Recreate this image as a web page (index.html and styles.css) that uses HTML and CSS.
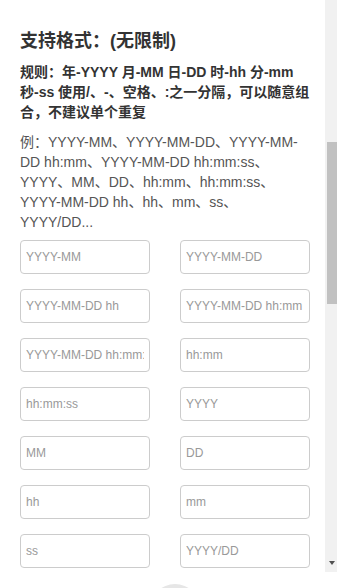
FILE: index.html
```html
<!DOCTYPE html>
<html lang="zh-CN">
<head>
<meta charset="utf-8">
<title>支持格式</title>
<link rel="stylesheet" href="styles.css">
</head>
<body>
<div class="app">
  <div class="viewport">
    <main class="content">
      <h2 class="title">支持格式：(无限制)</h2>
      <p class="rule">规则：年-YYYY 月-MM 日-DD 时-hh 分-mm 秒-ss 使用/、-、空格、:之一分隔，可以随意组合，不建议单个重复</p>
      <p class="example">例：YYYY-MM、YYYY-MM-DD、YYYY-MM-DD hh:mm、YYYY-MM-DD hh:mm:ss、YYYY、MM、DD、hh:mm、hh:mm:ss、YYYY-MM-DD hh、hh、mm、ss、YYYY/DD...</p>
      <div class="grid">
        <input class="field" type="text" placeholder="YYYY-MM">
        <input class="field" type="text" placeholder="YYYY-MM-DD">
        <input class="field" type="text" placeholder="YYYY-MM-DD hh">
        <input class="field" type="text" placeholder="YYYY-MM-DD hh:mm">
        <input class="field" type="text" placeholder="YYYY-MM-DD hh:mm:ss">
        <input class="field" type="text" placeholder="hh:mm">
        <input class="field" type="text" placeholder="hh:mm:ss">
        <input class="field" type="text" placeholder="YYYY">
        <input class="field" type="text" placeholder="MM">
        <input class="field" type="text" placeholder="DD">
        <input class="field" type="text" placeholder="hh">
        <input class="field" type="text" placeholder="mm">
        <input class="field" type="text" placeholder="ss">
        <input class="field" type="text" placeholder="YYYY/DD">
      </div>
    </main>
    <div class="scrollbar">
      <div class="thumb"></div>
      <div class="arrow"></div>
    </div>
  </div>
  <div class="footer">
    <div class="top-btn"></div>
  </div>
</div>
</body>
</html>
```

FILE: styles.css
```css
html, body {
  margin: 0;
  padding: 0;
  background: #fff;
}
.app {
  width: 337px;
  height: 588px;
  overflow: hidden;
  display: flex;
  flex-direction: column;
  font-family: "Liberation Sans", Arial, "Noto Sans CJK SC", sans-serif;
}
.viewport {
  height: 572px;
  display: flex;
  flex: none;
}
.content {
  flex: 1;
  overflow: hidden;
  padding: 29px 15px 0 20px;
}
.title {
  margin: 0;
  font-size: 18px;
  line-height: 24px;
  font-weight: bold;
  color: #333;
}
.rule {
  margin: 9px 0 0;
  font-size: 14px;
  line-height: 20px;
  font-weight: bold;
  color: #333;
}
.example {
  margin: 10px 0 0;
  font-size: 14px;
  line-height: 20px;
  color: #555;
}
.grid {
  margin-top: 8px;
  display: grid;
  grid-template-columns: 130px 130px;
  column-gap: 30px;
  row-gap: 15px;
}
.field {
  box-sizing: border-box;
  width: 130px;
  height: 34px;
  margin: 0;
  padding: 0 5px;
  border: 1px solid #ccc;
  border-radius: 4px;
  font-family: "Liberation Sans", Arial, sans-serif;
  font-size: 12px;
  color: #555;
  background: #fff;
  outline: none;
}
.field::placeholder {
  color: #999;
}
.scrollbar {
  width: 12px;
  flex: none;
  background: #f1f1f1;
  display: flex;
  flex-direction: column;
  align-items: flex-end;
}
.thumb {
  width: 10px;
  height: 162px;
  margin-top: 142px;
  background: #c1c1c1;
}
.arrow {
  margin-top: auto;
  margin-bottom: 7px;
  margin-right: 2px;
  width: 0;
  height: 0;
  border-left: 3.5px solid transparent;
  border-right: 3.5px solid transparent;
  border-top: 4px solid #505050;
}
.footer {
  flex: 1;
  display: flex;
  justify-content: center;
  padding-left: 13px;
}
.top-btn {
  width: 50px;
  height: 50px;
  margin-top: 12px;
  border-radius: 50%;
  background: #e6e6e6;
  flex: none;
}
```
